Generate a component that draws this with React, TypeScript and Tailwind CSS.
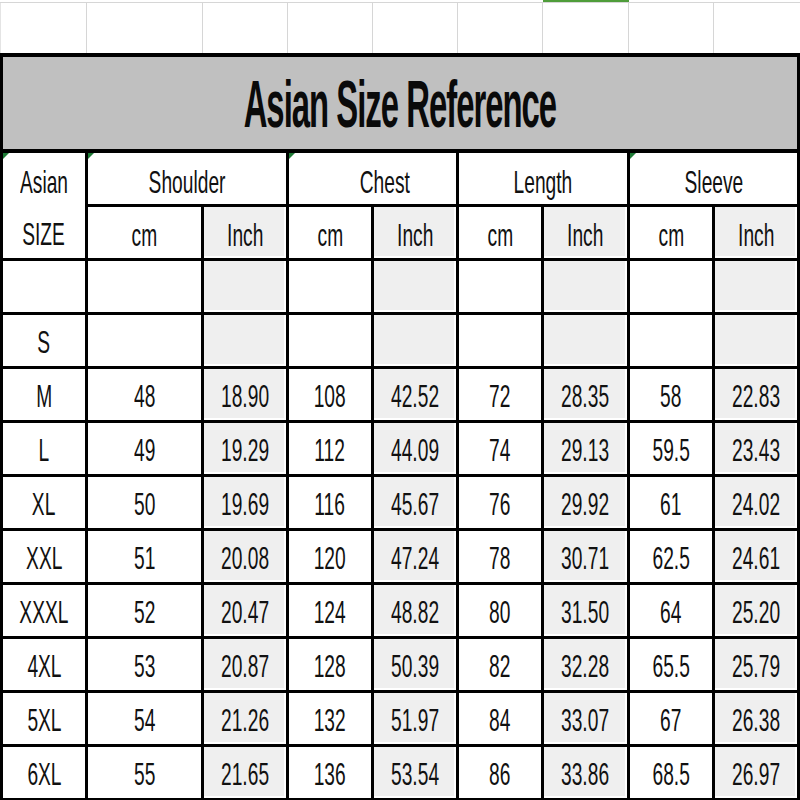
import React from "react";

const COLS = "grid-cols-[82px_113px_82px_82px_82px_82px_83px_82px_82px]";

function Tri() {
  return (
    <svg className="absolute left-0 top-0" width="6" height="6" viewBox="0 0 6 6">
      <polygon points="0,0 6,0 0,6" fill="#1e7b36" />
    </svg>
  );
}

function T({ children, pt = "pt-[3px]" }: { children?: React.ReactNode; pt?: string }) {
  return (
    <span className={`inline-block scale-x-[0.6] text-[32px] leading-none whitespace-nowrap text-[#111] ${pt}`}>
      {children}
    </span>
  );
}

function Cell({
  children,
  gray,
  span2,
  tri,
  pt,
  pad,
}: {
  children?: React.ReactNode;
  gray?: boolean;
  span2?: boolean;
  tri?: boolean;
  pt?: string;
  pad?: string;
}) {
  return (
    <div className={`relative bg-white ${span2 ? "col-span-2" : ""}`}>
      <div
        className={`h-full w-full flex items-center justify-center ${pad ?? ""} ${
          gray ? "bg-[#efefef] shadow-[inset_-2px_-2px_0_0_#ffffff]" : ""
        }`}
      >
        {children !== undefined && <T pt={pt}>{children}</T>}
      </div>
      {tri && <Tri />}
    </div>
  );
}

const rows: string[][] = [
  ["M", "48", "18.90", "108", "42.52", "72", "28.35", "58", "22.83"],
  ["L", "49", "19.29", "112", "44.09", "74", "29.13", "59.5", "23.43"],
  ["XL", "50", "19.69", "116", "45.67", "76", "29.92", "61", "24.02"],
  ["XXL", "51", "20.08", "120", "47.24", "78", "30.71", "62.5", "24.61"],
  ["XXXL", "52", "20.47", "124", "48.82", "80", "31.50", "64", "25.20"],
  ["4XL", "53", "20.87", "128", "50.39", "82", "32.28", "65.5", "25.79"],
  ["5XL", "54", "21.26", "132", "51.97", "84", "33.07", "67", "26.38"],
  ["6XL", "55", "21.65", "136", "53.54", "86", "33.86", "68.5", "26.97"],
];

const stripCols = [
  "w-[87px]",
  "w-[116px]",
  "w-[85px]",
  "w-[85px]",
  "w-[85px]",
  "w-[85px]",
  "w-[86px]",
  "w-[85px]",
  "flex-1",
];

export default function App() {
  return (
    <div className="w-[800px] h-[800px] bg-white overflow-hidden font-['Liberation_Sans',Arial,sans-serif]">
      {/* spreadsheet strip above the table */}
      <div className="h-[53px] flex flex-col">
        <div className="h-[2px] flex">
          <div className="w-[543px]" />
          <div className="w-[86px] bg-[#4f9d3a]" />
        </div>
        <div className="h-px bg-[#d6d6d6]" />
        <div className="flex-1 flex">
          {stripCols.map((w, i) => (
            <div
              key={i}
              className={`${w} h-full ${i < 8 ? "border-r border-[#d6d6d6]" : ""} ${
                i === 0 ? "border-l border-l-[#e4e4e4]" : ""
              }`}
            />
          ))}
        </div>
      </div>

      {/* table */}
      <div className="bg-black pt-[4px] px-[3px] pb-[2px] flex flex-col gap-[4px]">
        <div className="h-[92px] bg-[#c0c0c0] flex items-center justify-center">
          <span className="inline-block font-bold text-[67px] leading-none tracking-[-2px] scale-x-[0.49] whitespace-nowrap text-[#0a0a0a]">
            Asian Size Reference
          </span>
        </div>

        <div className={`grid ${COLS} auto-rows-[51px] gap-[3px]`}>
          {/* header */}
          <div className="relative row-span-2 bg-white flex flex-col">
            <div className="flex-1 flex items-center justify-center">
              <T pt="pt-[5px]">Asian</T>
            </div>
            <div className="flex-1 flex items-center justify-center">
              <T pt="pt-[4px]">SIZE</T>
            </div>
            <Tri />
          </div>
          <Cell span2 tri pt="pt-[6px]">Shoulder</Cell>
          <Cell span2 tri pt="pt-[6px]" pad="pl-[24px]">Chest</Cell>
          <Cell span2 pt="pt-[6px]">Length</Cell>
          <Cell span2 tri pt="pt-[6px]">Sleeve</Cell>

          {[0, 1, 2, 3].map((i) => (
            <React.Fragment key={"u" + i}>
              <Cell pt="pt-[5px]">cm</Cell>
              <Cell gray pt="pt-[5px]">Inch</Cell>
            </React.Fragment>
          ))}

          {/* empty row */}
          <Cell />
          {[0, 1, 2, 3].map((i) => (
            <React.Fragment key={"e" + i}>
              <Cell />
              <Cell gray />
            </React.Fragment>
          ))}

          {/* S row */}
          <Cell>S</Cell>
          {[0, 1, 2, 3].map((i) => (
            <React.Fragment key={"s" + i}>
              <Cell />
              <Cell gray />
            </React.Fragment>
          ))}

          {rows.map((r) => (
            <React.Fragment key={r[0]}>
              {r.map((v, j) => (
                <Cell key={j} gray={j > 0 && j % 2 === 0}>
                  {v}
                </Cell>
              ))}
            </React.Fragment>
          ))}
        </div>
      </div>
    </div>
  );
}
